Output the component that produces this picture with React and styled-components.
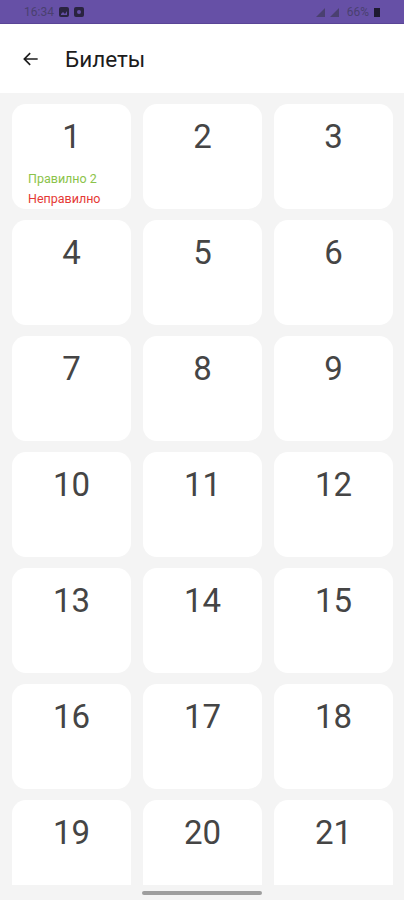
import React from 'react'
import styled, {createGlobalStyle} from 'styled-components'

const Global = createGlobalStyle`
    body{margin:0;font-family:Roboto,"Noto Sans",sans-serif;background:#f4f4f4;}
`

const Screen = styled.div`
    width:404px;
    height:900px;
    display:flex;
    flex-direction:column;
    overflow:hidden;
    background:#f4f4f4;
`
const StatusBar = styled.div`
    height:23px;
    background:#6650a6;
    border-bottom:1px solid #5a4596;
    display:flex;
    align-items:center;
    justify-content:space-between;
    padding:0 24px;
    color:#4a4070;
    font-size:12px;
`
const StatusGroup = styled.div`
    display:flex;
    align-items:center;
    gap:5px;
`
const Toolbar = styled.div`
    height:69px;
    background:#fff;
    display:flex;
    align-items:center;
    padding:0 20px 0 21px;
    gap:24px;
    flex-shrink:0;
`
const Title = styled.div`
    font-size:22.5px;
    color:#1c1c1c;
`
const Grid = styled.div`
    flex:1;
    overflow:hidden;
    padding:11px 11px 0 12px;
    display:grid;
    grid-template-columns:repeat(3,1fr);
    grid-auto-rows:105px;
    column-gap:12px;
    row-gap:11px;
`
const Card = styled.div`
    background:#fff;
    border-radius:14px;
    display:flex;
    flex-direction:column;
    align-items:center;
    padding-top:14px;
    box-sizing:border-box;
`
const Num = styled.div`
    font-size:33px;
    color:#454545;
    line-height:38px;
`
const Labels = styled.div`
    align-self:flex-start;
    padding-left:16px;
    margin-top:13px;
    font-size:12.5px;
    line-height:20px;
`
const Label = styled.div`
    color:${p => p.$ok ? '#8bc34a' : '#e53935'};
`
const NavBar = styled.div`
    height:15px;
    flex-shrink:0;
    display:flex;
    justify-content:center;
    align-items:flex-start;
    padding-top:6px;
    box-sizing:border-box;
    background:#f4f4f4;
`
const Handle = styled.div`
    width:120px;
    height:4px;
    border-radius:2px;
    background:#9e9e9e;
`

const Back = () => (
    <svg width="20" height="20" viewBox="0 0 24 24" fill="none" stroke="#1c1c1c" strokeWidth="2">
        <path d="M20 12H5M11 5l-7 7 7 7" />
    </svg>
)

const App = () => {
  const tickets = Array.from({length:21},(_,i) => i + 1)
  return (
    <Screen>
        <Global />
        <StatusBar>
            <StatusGroup>
                <span>16:34</span>
                <svg width="10" height="10" viewBox="0 0 10 10"><rect width="10" height="10" rx="2" fill="#2a2440"/><path d="M2 7l2-2 2 2 2-3v4H2z" fill="#6650a6"/></svg>
                <svg width="10" height="10" viewBox="0 0 10 10"><rect width="10" height="10" rx="2" fill="#2a2440"/><circle cx="5" cy="5" r="2" fill="#6650a6"/></svg>
            </StatusGroup>
            <StatusGroup>
                <svg width="26" height="10" viewBox="0 0 26 10" fill="#4a4070"><path d="M0 10L9 1v9z"/><path d="M14 10L23 1v9z"/></svg>
                <span>66%</span>
                <svg width="6" height="10" viewBox="0 0 6 10"><rect y="1" width="6" height="9" fill="#1e1a30"/></svg>
            </StatusGroup>
        </StatusBar>
        <Toolbar>
            <Back />
            <Title>Билеты</Title>
        </Toolbar>
        <Grid>
            {tickets.map(n => (
                <Card key={n}>
                    <Num>{n}</Num>
                    {n === 1 && (
                        <Labels>
                            <Label $ok>Правилно 2</Label>
                            <Label>Неправилно</Label>
                        </Labels>
                    )}
                </Card>
            ))}
        </Grid>
        <NavBar><Handle /></NavBar>
    </Screen>
  )
}

export default App
